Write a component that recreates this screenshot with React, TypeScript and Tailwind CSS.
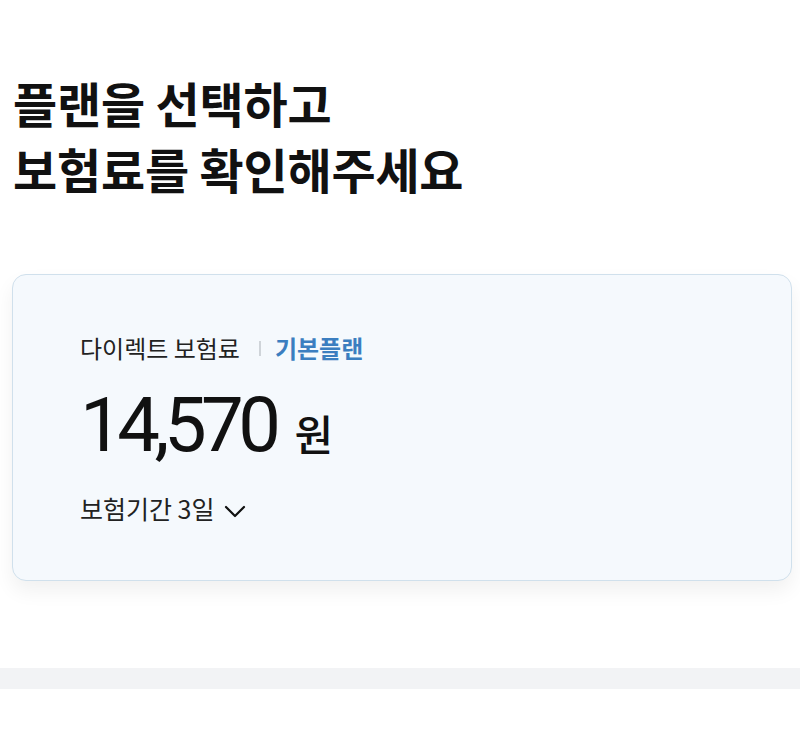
import React from 'react';

const font = { fontFamily: '"Noto Sans CJK KR", "Noto Sans", sans-serif' };

const ChevronDown: React.FC = () => (
  <svg width="22" height="13" viewBox="0 0 22 13" fill="none" stroke="#111" strokeWidth="2.2" strokeLinecap="round" strokeLinejoin="round">
    <path d="M2 2l9 9 9-9" />
  </svg>
);

const App: React.FC = () => {
  return (
    <div className="min-h-screen bg-white text-[#111]" style={font}>
      {/* Title */}
      <h1 className="px-[13px] pt-[69px] text-[48px] font-bold leading-[66px] tracking-[-0.2px]">
        플랜을 선택하고
        <br />
        보험료를 확인해주세요
      </h1>

      {/* Premium card */}
      <div className="ml-3 mr-2 mt-[73px] h-[307px] rounded-[14px] border border-[#d0e0ec] bg-[#f5f9fd] pl-[67px] pt-[57px] shadow-[0_10px_20px_rgba(0,0,0,0.06)]">
        <div className="flex items-center text-[24px] leading-[32px]">
          <span className="text-[#222]">다이렉트 보험료</span>
          <span className="ml-[19px] mr-[14px] h-[15px] w-[2px] bg-[#cfd4d9]" />
          <span className="font-bold text-[#3b7ec0]">기본플랜</span>
        </div>
        <div className="mt-[23px] flex h-[76px] items-baseline">
          <span className="font-['Roboto'] text-[76px] leading-[76px] tracking-[-5.5px]">14,570</span>
          <span className="ml-[19px] text-[42px] font-medium">원</span>
        </div>
        <div className="mt-[29px] flex items-center gap-[10px] text-[25px] leading-[32px] text-[#222]">
          <span>보험기간 3일</span>
          <span className="mt-[6px]">
            <ChevronDown />
          </span>
        </div>
      </div>

      {/* Divider band */}
      <div className="mt-[87px] h-[21px] bg-[#f2f3f5]" />
    </div>
  );
};

export default App;
